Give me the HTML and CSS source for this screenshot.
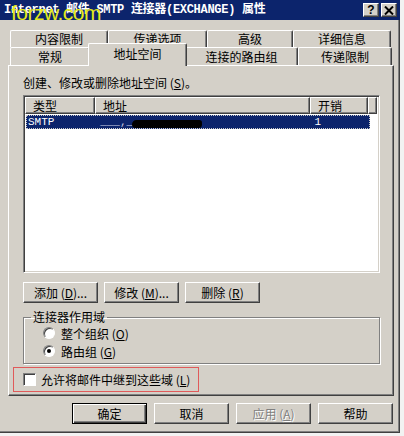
FILE: index.html
```
<!DOCTYPE html>
<html lang="zh-CN">
<head>
    <meta charset="UTF-8">
    <title>SMTP 连接器属性</title>
    <link rel="stylesheet" href="styles.css">
</head>
<body>

    <div class="window">
        <div class="titlebar">
            <span class="title">Internet 邮件 SMTP 连接器(EXCHANGE) 属性</span>
            <span class="watermark">forzw.com</span>
            <div class="caption-btns">
                <span class="cbtn">?</span>
                <span class="cbtn">
                    <svg width="10" height="9" viewBox="0 0 10 9"><path d="M1 0.5 L9 8.5 M9 0.5 L1 8.5" stroke="#000" stroke-width="2"/></svg>
                </span>
            </div>
        </div>

        <div class="tabs">
            <div class="tab-row back">
                <div class="tab w98">内容限制</div>
                <div class="tab w99">传递选项</div>
                <div class="tab w86">高级</div>
                <div class="tab w98">详细信息</div>
            </div>
            <div class="tab-row front">
                <div class="tab w80">常规</div>
                <div class="tab active">地址空间</div>
                <div class="tab w113">连接的路由组</div>
                <div class="tab w94">传递限制</div>
            </div>
        </div>

        <div class="panel">
            <p class="intro">创建、修改或删除地址空间 (<u>S</u>)。</p>

            <div class="listview">
                <div class="lv-header">
                    <div class="hcell c-type">类型</div>
                    <div class="hcell c-addr">地址</div>
                    <div class="hcell c-cost">开销</div>
                    <div class="hcell c-rest"></div>
                </div>
                <div class="lv-row selected">
                    <div class="cell c-type mono">SMTP</div>
                    <div class="cell c-addr"><span class="mono dim">___,__</span><span class="blob"></span></div>
                    <div class="cell c-cost mono">1</div>
                </div>
            </div>

            <div class="btn-row">
                <button class="btn">添加 (<u>D</u>)...</button>
                <button class="btn">修改 (<u>M</u>)...</button>
                <button class="btn">删除 (<u>R</u>)</button>
            </div>

            <fieldset class="group">
                <legend>连接器作用域</legend>
                <label class="option"><span class="radio"></span><span>整个组织 (<u>O</u>)</span></label>
                <label class="option"><span class="radio on"></span><span>路由组 (<u>G</u>)</span></label>
            </fieldset>

            <div class="relay">
                <span class="checkbox"></span><span>允许将邮件中继到这些域 (<u>L</u>)</span>
            </div>
        </div>

        <div class="actions">
            <button class="btn default">确定</button>
            <button class="btn">取消</button>
            <button class="btn disabled">应用 (<u>A</u>)</button>
            <button class="btn">帮助</button>
        </div>
    </div>

</body>
</html>
```

FILE: styles.css
```
body {
    margin: 0;
    background: #f2f2f2;
    font-family: "Noto Sans CJK SC", "Liberation Sans", sans-serif;
    font-size: 12px;
    color: #000;
}

.window {
    width: 400px;
    height: 433px;
    box-sizing: border-box;
    background: #d4d0c8;
    border-right: 1px solid #404040;
    border-bottom: 1px solid #404040;
    box-shadow: inset -1px -1px 0 #808080;
}

/* Title bar */
.titlebar {
    position: relative;
    height: 20px;
    background: #0c246c;
    color: #fff;
    display: flex;
    align-items: center;
    padding-left: 4px;
    margin-right: -1px;
}

.title {
    font-family: "Liberation Mono", "Noto Sans CJK SC", monospace;
    font-weight: bold;
    font-size: 12px;
    line-height: 20px;
    letter-spacing: -0.3px;
}

.watermark {
    position: absolute;
    left: 11px;
    top: 1px;
    font-family: "Liberation Sans", sans-serif;
    font-size: 21px;
    line-height: 24px;
    color: #e4ea1a;
    letter-spacing: -0.5px;
}

.caption-btns {
    margin-left: auto;
    display: flex;
    gap: 2px;
    padding-right: 3px;
}

.cbtn {
    width: 16px;
    height: 14px;
    box-sizing: border-box;
    background: #d4d0c8;
    border: 1px solid;
    border-color: #fff #404040 #404040 #fff;
    box-shadow: inset -1px -1px 0 #808080;
    display: flex;
    align-items: center;
    justify-content: center;
    font-family: "Liberation Sans", sans-serif;
    font-weight: bold;
    font-size: 12px;
    color: #000;
    line-height: 1;
}

/* Tabs */
.tabs {
    margin-top: 10px;
    padding-left: 10px;
}

.tab-row {
    display: flex;
}

.tab {
    box-sizing: border-box;
    height: 17px;
    border-top: 1px solid #fff;
    border-left: 1px solid #fff;
    border-right: 1px solid #404040;
    box-shadow: inset -1px 0 0 #808080;
    border-radius: 2px 2px 0 0;
    text-align: center;
    line-height: 16px;
    font-size: 12px;
}

.front .tab {
    height: 18px;
    line-height: 17px;
}

.w80 { width: 80px; }
.w86 { width: 86px; }
.w94 { width: 94px; }
.w98 { width: 98px; }
.w99 { width: 99px; }
.w113 { width: 113px; }

.front .tab.active {
    position: relative;
    z-index: 1;
    width: 99px;
    height: 23px;
    margin: -4px -2px -1px -2px;
    background: #d4d0c8;
    line-height: 19px;
}

/* Panel */
.panel {
    box-sizing: border-box;
    width: 386px;
    height: 331px;
    margin-left: 8px;
    padding: 10px 12px 0 14px;
    border-top: 1px solid #fff;
    border-left: 1px solid #fff;
    border-right: 1px solid #404040;
    border-bottom: 1px solid #404040;
    box-shadow: inset -1px -1px 0 #808080;
}

.intro {
    margin: 0;
    line-height: 14px;
}

.listview {
    box-sizing: border-box;
    width: 357px;
    height: 178px;
    margin-top: 5px;
    background: #fff;
    border: 1px solid;
    border-color: #808080 #fff #fff #808080;
    box-shadow: inset 1px 1px 0 #404040, inset -1px -1px 0 #d4d0c8;
    padding: 1px 1px 0 1px;
}

.lv-header {
    display: flex;
    height: 17px;
}

.hcell {
    box-sizing: border-box;
    height: 17px;
    background: #d4d0c8;
    border: 1px solid;
    border-color: #fff #404040 #404040 #fff;
    box-shadow: inset -1px -1px 0 #808080;
    padding-left: 7px;
    line-height: 15px;
}

.c-type { width: 70px; }
.c-addr { width: 215px; }
.c-cost { width: 58px; }
.c-rest { width: 9px; }

.lv-row {
    display: flex;
    height: 14px;
    width: 344px;
    margin: 1px 0 0 1px;
    box-sizing: border-box;
    line-height: 12px;
}

.lv-row.selected {
    background: #0c246c;
    color: #fff;
    outline: 1px dotted #c8c8c8;
    outline-offset: -1px;
}

.lv-row .cell {
    padding-left: 2px;
    display: flex;
    align-items: center;
}

.lv-row .c-type { width: 69px; }
.lv-row .c-addr { width: 215px; padding-left: 6px; }
.lv-row .c-cost { padding-left: 8px; }

.mono {
    font-family: "Liberation Mono", monospace;
    font-size: 11px;
}

.dim {
    color: #c0c8e0;
}

.blob {
    display: inline-block;
    width: 70px;
    height: 8px;
    margin-left: -8px;
    margin-top: 3px;
    background: #000;
    border-radius: 5px 3px 4px 4px;
}

/* Buttons */
.btn {
    box-sizing: border-box;
    width: 75px;
    height: 21px;
    padding: 0;
    background: #d4d0c8;
    border: 1px solid;
    border-color: #fff #404040 #404040 #fff;
    box-shadow: inset -1px -1px 0 #808080, inset 1px 1px 0 #d4d0c8;
    font-family: "Noto Sans CJK SC", "Liberation Sans", sans-serif;
    font-size: 12px;
    line-height: 18px;
    color: #000;
}

.btn-row {
    display: flex;
    gap: 6px;
    margin-top: 9px;
}

.btn.default {
    border: 1px solid #000;
    box-shadow: inset 1px 1px 0 #fff, inset -1px -1px 0 #404040, inset -2px -2px 0 #808080;
}

.btn.disabled {
    color: #808080;
    text-shadow: 1px 1px 0 #fff;
}

/* Group box */
.group {
    width: 357px;
    box-sizing: border-box;
    margin: 7px 0 0 0;
    padding: 0 0 3px 19px;
    border: 1px solid #808080;
    box-shadow: 1px 1px 0 #fff, inset 1px 1px 0 #fff;
}

.group legend {
    padding: 0 2px;
    margin-left: -12px;
    line-height: 14px;
}

.option {
    display: flex;
    align-items: center;
    height: 18px;
    gap: 6px;
}

.radio {
    box-sizing: border-box;
    width: 12px;
    height: 12px;
    border-radius: 50%;
    background: #fff;
    border: 1px solid;
    border-color: #808080 #fff #fff #808080;
    box-shadow: inset 1px 1px 0 #404040;
    display: flex;
    align-items: center;
    justify-content: center;
}

.radio.on::after {
    content: "";
    width: 4px;
    height: 4px;
    border-radius: 50%;
    background: #000;
}

/* Relay checkbox */
.relay {
    box-sizing: border-box;
    width: 186px;
    height: 25px;
    margin: 3px 0 0 -10px;
    padding-left: 9px;
    border: 1px solid #e05a5a;
    display: flex;
    align-items: center;
    gap: 5px;
    white-space: nowrap;
}

.checkbox {
    box-sizing: border-box;
    width: 13px;
    height: 13px;
    background: #fff;
    border: 1px solid;
    border-color: #808080 #fff #fff #808080;
    box-shadow: inset 1px 1px 0 #404040;
}

/* Dialog buttons */
.actions {
    display: flex;
    justify-content: flex-end;
    gap: 7px;
    margin-top: 7px;
    padding-right: 6px;
}
```
